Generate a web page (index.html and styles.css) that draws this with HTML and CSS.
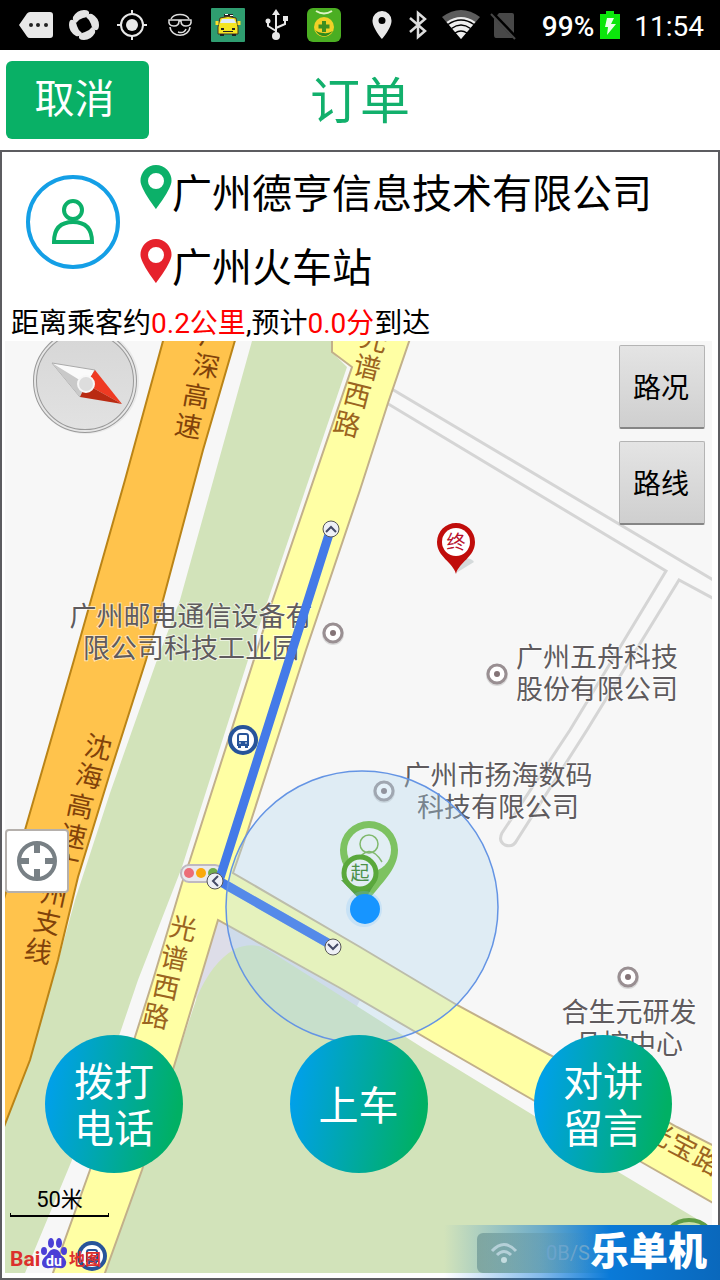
FILE: index.html
```html
<!DOCTYPE html>
<html lang="zh-CN">
<head>
    <meta charset="UTF-8">
    <meta name="viewport" content="width=device-width, initial-scale=1.0">
    <title>订单</title>
    <link rel="stylesheet" href="styles.css">
</head>
<body>
    <div class="status-bar">
        <div class="status-left">
            <svg viewBox="0 0 48 50"><path d="M7 25 15 13.500q1-1.500 3-1.500h20q3 0 3 3v20q0 3-3 3H18q-2 0-3-1.500z" fill="#e8e8e8"/><g fill="#222"><circle cx="19" cy="25" r="2"/><circle cx="26" cy="25" r="2"/><circle cx="34" cy="25" r="2"/></g></svg>
            <svg viewBox="0 0 48 50"><g fill="#e4e4e4"><path id="petal" d="M13 17Q17 10 24 10q6 0 5 4-1 3-6 4-4 1-7 5-4-2-3-6z"/><use href="#petal" transform="rotate(90 24 25)"/><use href="#petal" transform="rotate(180 24 25)"/><use href="#petal" transform="rotate(270 24 25)"/></g></svg>
            <svg viewBox="0 0 48 50"><g fill="none" stroke="#e8e8e8" stroke-width="2"><circle cx="24" cy="25" r="11"/><path d="M24 10v5M24 35v5M9 25h5M34 25h5"/></g><circle cx="24" cy="25" r="6" fill="#e8e8e8"/></svg>
            <svg viewBox="0 0 48 50"><g fill="none" stroke="#ddd" stroke-width="1.500"><path d="M15 19C18 13 30 13 33 19M14 27c1 11 19 11 20 0M22 32q6 2 8-3"/><path d="M13 20h22q1 6-5 6-5 0-5-5h-2q0 5-5 5-6 0-5-6z"/></g></svg>
            <svg viewBox="0 0 48 50"><rect x="7" y="8" width="34" height="34" rx="1" fill="#2f9d70"/><path d="M20 14h9v3h-9z" fill="#222"/><path d="M21 14h3v1h-3zM26 15h3v1h-3z" fill="#fff"/><path d="M16 18q8-3 16 0l2 9v7H14v-7z" fill="#f4e522" stroke="#432" stroke-width="1"/><path d="M18 19h12l2 4H16z" fill="#ddeafa"/><path d="M13 21v4M35 21v4" stroke="#ffe02b" stroke-width="3"/><path d="M17 28h3v2h-3zM28 28h3v2h-3zM19 31h10v1H19zM16 34h4v2h-4zM28 34h4v2h-4z" fill="#222"/></svg>
            <svg viewBox="0 0 48 50"><g fill="none" stroke="#e8e8e8" stroke-width="2"><path d="M24 14v21M24 31l-8-5v-4M24 28l9-4v-5"/></g><g fill="#e8e8e8"><path d="M24 9l4 6h-8zM31 16h5v5h-5z"/><circle cx="16" cy="21" r="2.500"/><circle cx="24" cy="36" r="4"/></g></svg>
            <svg viewBox="0 0 48 50"><rect x="7" y="8" width="34" height="34" rx="6" fill="#4bae22"/><path d="M16 11q8 5 16 0" fill="none" stroke="#dff5c5" stroke-width="2"/><circle cx="24" cy="27" r="10" fill="#f2d127"/><path d="M15 30q8 12 18 1-6 3-9 2-6 0-9-3z" fill="#2e8a1c"/><path d="M24 21v11M18.500 26.500h11" stroke="#3d8e20" stroke-width="4"/></svg>
        </div>
        <div class="status-right">
            <svg class="icon-pin" viewBox="0 0 20 30"><path d="M10 1a9.500 9.500 0 0 0-9.500 10C.5 18 10 29 10 29s9.500-11 9.500-18A9.500 9.500 0 0 0 10 1zm0 6a3.500 3.500 0 1 1 0 7 3.500 3.500 0 0 1 0-7z" fill="#e8e8e8" fill-rule="evenodd"/></svg>
            <svg class="icon-bt" viewBox="0 0 20 30"><path d="M2 8l15 13-7 6V3l7 6L2 22" fill="none" stroke="#ddd" stroke-width="2.500"/></svg>
            <svg class="icon-wifi" viewBox="0 0 38 30"><path d="M0 7q19-14 38 0L19 29z" fill="#5c5c5c"/><path d="M4.500 12q14.500-10 29 0L19 29z" fill="#eee"/><path d="M6 14.500q13-9 26 0M9.500 18.500q9.500-7 19 0M13 23q6-4 12 0" fill="none" stroke="#000" stroke-width="1.500"/></svg>
            <svg class="icon-sim" viewBox="0 0 28 30"><path d="M4 9l5-6h13q2 0 2 2v20q0 3-2 3H6q-2 0-2-3z" fill="#484848"/><path d="M2 3l24 25" stroke="#000" stroke-width="4"/><path d="M1 4l24 25" stroke="#484848" stroke-width="2"/></svg>
            <span class="percent">99%</span>
            <svg class="icon-battery" viewBox="0 0 20 30"><path d="M6 1h8v3h6v25H0V4h6z" fill="#0be60b"/><path d="M7 8h7l-3 6h5L7 25l1-8H5z" fill="#eaffea"/></svg>
            <span class="clock">11:54</span>
        </div>
    </div>

    <header class="title-bar">
        <button type="button" class="cancel">取消</button>
        <h1>订单</h1>
    </header>

    <main class="order">
        <section class="passenger">
            <svg class="avatar" viewBox="0 0 94 94"><circle cx="47" cy="47" r="45" fill="none" stroke="#149fe6" stroke-width="4"/><g fill="none" stroke="#0cb069" stroke-width="4"><circle cx="47" cy="35" r="9"/><path d="M28 67q0-20 19-20t19 20z"/></g></svg>
            <div class="places">
                <div class="place">
                    <svg class="place-pin" viewBox="0 0 32 44"><path class="start" d="M16 0A15.500 15.500 0 0 0 .5 16C.5 24 16 44 16 44s15.500-20 15.500-28A15.500 15.500 0 0 0 16 0zm0 8a8 8 0 1 1 0 16 8 8 0 0 1 0-16z" fill-rule="evenodd"/></svg>
                    <span>广州德亨信息技术有限公司</span>
                </div>
                <div class="place">
                    <svg class="place-pin" viewBox="0 0 32 44"><path class="end" d="M16 0A15.500 15.500 0 0 0 .5 16C.5 24 16 44 16 44s15.500-20 15.500-28A15.500 15.500 0 0 0 16 0zm0 8a8 8 0 1 1 0 16 8 8 0 0 1 0-16z" fill-rule="evenodd"/></svg>
                    <span>广州火车站</span>
                </div>
            </div>
        </section>
        <p class="eta">距离乘客约<em>0.2公里</em>,预计<em>0.0分</em>到达</p>

        <section class="map">
            <svg class="map-canvas" viewBox="5 341 707 932" preserveAspectRatio="xMidYMid slice">
                <defs>
                    <g id="poi"><circle r="11" cy="1" fill="#bbb" opacity=".5"/><circle r="9" fill="#fff" stroke="#998f92" stroke-width="3"/><circle r="3" fill="#847477"/></g>
                    <g id="bus"><circle r="15" fill="#27549a"/><circle r="11" fill="#fff"/><path d="M-5-4q0-2 2-2h6q2 0 2 2v9H-5z" fill="none" stroke="#27549a" stroke-width="2"/><path d="M-5 1H5v4H-5zM-5 5h3v3h-3zM2 5h3v3H2z" fill="#27549a"/><path d="M-4 3h2M2 3h2" stroke="#fff"/></g>
                    <g id="node"><circle r="8" fill="#eef0f6" stroke="#555" stroke-width="1"/><path d="M-5 3l5-5 5 5" fill="none" stroke="#444a66" stroke-width="2"/></g>
                    <linearGradient id="dial" x2="0" y2="1"><stop offset="0" stop-color="#d6d6d6"/><stop offset="1" stop-color="#e2e2e2"/></linearGradient>
                </defs>

                <!-- parks -->
                <path class="park" d="M252 341H332V352L347 367 267 603 248 660 182 867 138 980 120 1033 72 1160 25 1273H5V1123L53 980 75 900 110 793 157 660 180 600z"/>
                <path fill="#dddde8" d="M218 920L360 1000 352 1016 200 1026 196 996z"/>
                <path class="park" d="M105 1273L142 1170 175 1063 197 997Q212 962 235 949 250 942 265 948L352 1003 423 1048 533 1115 620 1173 712 1228V1273z"/>

                <!-- roads -->
                <path class="lane" d="M380 382L720 584V602L679 580 587 730 517 840Q513 848 505 845 498 841 502 833L570 730 666 571 380 399z"/>
                <path class="highway" d="M166 330L125 480 74 660 25 830 0 912V1137L30 1060 58 960 78 877 110 773 146 660 163 600 203 450 238 330z"/>
                <path class="road" d="M332 330V352L352 367 272 602 257 650 190 860 182 883 153 980 135 1037 90 1170 49 1284H101L142 1170 175 1063 200 980 218 920 340 988 443 1048 533 1100 643 1163 720 1207V1149L677 1127 550 1055 457 1005 360 947 233 873 248 830 306 650 360 490 388 403 413 330z"/>

                <!-- road names -->
                <g class="road-name highway-name">
                    <text transform="translate(213 337) rotate(10)" y="9">广</text>
                    <text transform="translate(206 367) rotate(10)" y="9">深</text>
                    <text transform="translate(196 397) rotate(10)" y="9">高</text>
                    <text transform="translate(188 427) rotate(10)" y="9">速</text>
                    <text transform="translate(98 748) rotate(12)" y="9">沈</text>
                    <text transform="translate(89 777) rotate(12)" y="9">海</text>
                    <text transform="translate(80 807) rotate(12)" y="9">高</text>
                    <text transform="translate(73 837) rotate(12)" y="9">速</text>
                    <text transform="translate(65 867) rotate(12)" y="9">广</text>
                    <text transform="translate(54 895) rotate(12)" y="9">州</text>
                    <text transform="translate(47 923) rotate(12)" y="9">支</text>
                    <text transform="translate(38 952) rotate(12)" y="9">线</text>
                </g>
                <g class="road-name">
                    <text transform="translate(374 340) rotate(14)" y="9">光</text>
                    <text transform="translate(367 368) rotate(14)" y="9">谱</text>
                    <text transform="translate(357 396) rotate(14)" y="9">西</text>
                    <text transform="translate(347 425) rotate(14)" y="9">路</text>
                    <text transform="translate(183 929) rotate(12)" y="9">光</text>
                    <text transform="translate(174 959) rotate(12)" y="9">谱</text>
                    <text transform="translate(166 988) rotate(12)" y="9">西</text>
                    <text transform="translate(156 1017) rotate(12)" y="9">路</text>
                    <text transform="translate(659 1134) rotate(28)" y="9">光</text>
                    <text transform="translate(683 1148) rotate(28)" y="9">宝</text>
                    <text transform="translate(707 1162) rotate(28)" y="9">路</text>
                </g>

                <!-- places -->
                <g class="poi-name">
                    <text x="191" y="626">广州邮电通信设备有</text>
                    <text x="191" y="658">限公司科技工业园</text>
                    <text x="597" y="667">广州五舟科技</text>
                    <text x="597" y="699">股份有限公司</text>
                    <text x="498" y="785">广州市扬海数码</text>
                    <text x="498" y="817">科技有限公司</text>
                    <text x="629" y="1022">合生元研发</text>
                    <text x="629" y="1054">品控中心</text>
                </g>
                <use href="#poi" x="333" y="633"/>
                <use href="#poi" x="497" y="674"/>
                <use href="#poi" x="384" y="791"/>
                <use href="#poi" x="628" y="977"/>
                <use href="#bus" x="243" y="740"/>
                <use href="#bus" x="92" y="1256"/>
                <circle cx="689" cy="1247" r="27" fill="#c9dfa8" stroke="#5f9d46" stroke-width="4"/>
                <rect x="181" y="865" width="42" height="17" rx="8" fill="#e9e9ee" stroke="#bfb9c0" stroke-width="2"/>
                <circle cx="189" cy="873" r="5" fill="#ec6d78"/><circle cx="201" cy="873" r="5" fill="#fba90b"/><circle cx="213" cy="873" r="5" fill="#73ae4c"/>

                <!-- route -->
                <path d="M331 528L219 881l114 65" fill="none" stroke="#447ae8" stroke-width="9"/>
                <circle cx="362" cy="907" r="136" fill="#b0d8f0" fill-opacity=".33"/>
                <path d="M226 885l107 61" fill="none" stroke="#4a80e8" stroke-opacity=".6" stroke-width="9"/>
                <circle cx="362" cy="907" r="136" fill="none" stroke="#6494e4" stroke-width="1.500"/>
                <use href="#node" x="331" y="529"/>
                <use href="#node" transform="translate(215 881) rotate(-90)"/>
                <use href="#node" transform="translate(333 947) rotate(180)"/>

                <!-- start, end and current position -->
                <path d="M369 900c-8-16-29-28-29-50a29 29 0 0 1 58 0c0 20-18 34-29 50z" fill="#7dc261"/>
                <circle cx="369" cy="850" r="22" fill="#e2eef4"/>
                <g fill="none" stroke="#80b96d" stroke-width="1.500"><circle cx="369" cy="844" r="9"/><path d="M355 864q14-24 27-2"/></g>
                <path d="M341 880l22 23 12-20z" fill="#55a045"/>
                <circle cx="360" cy="873" r="16" fill="#e2eef4" stroke="#5aa83c" stroke-width="5"/>
                <text class="pin-text start" x="360" y="880">起</text>
                <circle cx="364" cy="909" r="18" fill="#7fc4fb" opacity=".25"/>
                <circle cx="365" cy="909" r="15" fill="#1795ff"/>
                <path d="M456 573l18-11q-3-5-10-3z" fill="#d5dadb"/>
                <path d="M456 574c-3-12-19-17-19-32a19 19 0 0 1 38 0c0 15-16 20-19 32z" fill="#c00d0b"/>
                <circle cx="456" cy="542" r="14" fill="#fff"/>
                <text class="pin-text end" x="456" y="549">终</text>

                <!-- compass -->
                <circle cx="86" cy="381" r="53" fill="#ddd" opacity=".5"/>
                <circle cx="85" cy="381" r="50" fill="url(#dial)" stroke="#999" stroke-width="4"/>
                <circle cx="85" cy="381" r="50" fill="none" stroke="#e6e6e6" stroke-width="2"/>
                <path d="M52 363l43 7-15 27z" fill="#fafafa" stroke="#aaa"/>
                <path d="M52 363l34 21-6 13z" fill="#c9c9c9"/>
                <path d="M95 370l27 34-36-20z" fill="#ef3a22"/>
                <path d="M122 404l-42-7 6-13z" fill="#b92a12"/>
                <circle cx="86" cy="384" r="8" fill="#ddd" stroke="#f7f7f7" stroke-width="2"/>
            </svg>

            <div class="layer-buttons">
                <button type="button">路况</button>
                <button type="button">路线</button>
            </div>

            <button type="button" class="locate" aria-label="定位">
                <svg viewBox="0 0 42 42"><circle cx="21" cy="21" r="18" fill="none" stroke="#788085" stroke-width="4"/><path d="M21 3v10M21 29v10M3 21h10M29 21h10" stroke="#788085" stroke-width="6"/></svg>
            </button>

            <div class="actions">
                <button type="button">拨打<br>电话</button>
                <button type="button">上车</button>
                <button type="button">对讲<br>留言</button>
            </div>

            <div class="map-legend">
                <div class="scale">50米</div>
                <svg class="baidu" viewBox="0 0 94 34">
                    <text x="0" y="29" class="bai">Bai</text>
                    <g fill="#4a3fd6"><ellipse cx="34" cy="14" rx="3" ry="4"/><ellipse cx="41" cy="6" rx="3" ry="5"/><ellipse cx="49" cy="6" rx="3" ry="5"/><ellipse cx="54" cy="14" rx="3" ry="4"/><path d="M44 12q5 0 7 6 6 4 5 9-1 5-7 4-5-1-9 0-8 1-8-5 0-4 5-8 3-6 7-6z"/></g>
                    <text x="36" y="29" class="du">du</text>
                    <text x="59" y="28" class="ditu">地图</text>
                </svg>
            </div>
        </section>
    </main>

    <div class="watermark">
        <div class="speed">
            <svg viewBox="0 0 28 22"><g fill="none" stroke="#b5d0d8" stroke-width="3"><path d="M2 9q12-13 24 0M7 13q7-7 14 0"/></g><circle cx="14" cy="18" r="3" fill="#c4dce0"/></svg>
            <span>0B/S</span>
        </div>
        <strong>乐单机</strong>
    </div>
</body>
</html>
```
FILE: styles.css
```css
* {
    box-sizing: border-box;
}
body {
    position: relative;
    display: flex;
    flex-direction: column;
    min-height: 100vh;
    margin: 0;
    background-color: #fff;
    color: #000;
    font-family: Roboto, "Noto Sans CJK SC", sans-serif;
}
button {
    padding: 0;
    border: none;
    font-family: inherit;
    cursor: pointer;
}

/* status bar */
.status-bar {
    display: flex;
    justify-content: space-between;
    height: 50px;
    padding: 0 16px 0 12px;
    background-color: #000;
    color: #fff;
    font-size: 28px;
    line-height: 54px;
}
.status-left {
    display: flex;
}
.status-left svg {
    width: 48px;
    height: 50px;
}
.status-right {
    display: flex;
    align-items: center;
    height: 50px;
}
.status-right svg {
    height: 30px;
}
.status-right span {
    padding-top: 4px;
}
.icon-pin {
    width: 20px;
    margin-right: 16px;
}
.icon-bt {
    width: 20px;
    margin-right: 14px;
}
.icon-wifi {
    width: 38px;
    margin-right: 10px;
}
.icon-sim {
    width: 28px;
    margin-right: 24px;
}
.icon-battery {
    width: 20px;
    margin: 0 14px 0 6px;
}
.percent {
    font-weight: 500;
}

/* title */
.title-bar {
    display: grid;
    grid-template-columns: 1fr auto 1fr;
    align-items: center;
    height: 100px;
    padding: 0 6px;
}
.cancel {
    width: 143px;
    height: 78px;
    padding-right: 6px;
    border-radius: 6px;
    background-color: #09b066;
    color: #fff;
    font-size: 40px;
    line-height: 76px;
}
h1 {
    margin: 0;
    padding-top: 4px;
    color: #12b06c;
    font-size: 50px;
    font-weight: 400;
    line-height: 60px;
}

/* order */
.order {
    display: flex;
    flex: 1;
    flex-direction: column;
    padding: 4px 6px 5px 3px;
    border: 2px solid #5c5c60;
}
.passenger {
    display: flex;
    gap: 20px;
    padding-left: 21px;
}
.avatar {
    flex: none;
    width: 94px;
    height: 94px;
    margin-top: 19px;
}
.place {
    display: flex;
    height: 74px;
    font-size: 40px;
    line-height: 78px;
}
.place-pin {
    flex: none;
    width: 32px;
    height: 44px;
    margin-top: 9px;
}
.start {
    fill: #0cb069;
}
.end {
    fill: #e6222c;
}
.eta {
    height: 37px;
    margin: 0;
    padding-left: 6px;
    font-size: 28px;
    line-height: 39px;
}
.eta em {
    color: #f00;
    font-style: normal;
}

/* map */
.map {
    position: relative;
    flex: 1;
    min-height: 700px;
    overflow: hidden;
    background-color: #f7f7f7;
}
.map-canvas {
    position: absolute;
    width: 100%;
    height: 100%;
}
.park {
    fill: #d2e3ba;
}
.lane {
    fill: #f8f8f8;
    stroke: #d5d5d5;
    stroke-width: 3;
}
.highway {
    fill: #ffc34c;
    stroke: #ba8417;
    stroke-width: 2;
}
.road {
    fill: #ffffa4;
    stroke: #c2b08a;
    stroke-width: 2;
}
.road-name {
    fill: #9b6420;
    font-size: 27px;
    text-anchor: middle;
}
.highway-name {
    fill: #81420a;
}
.poi-name {
    fill: #5f5b5e;
    stroke: rgba(255, 255, 255, 0.6);
    stroke-width: 2;
    paint-order: stroke;
    font-size: 27px;
    text-anchor: middle;
}
.pin-text {
    font-size: 19px;
    text-anchor: middle;
}
.pin-text.start {
    fill: #4c9148;
}
.pin-text.end {
    fill: #b8102c;
}
.layer-buttons {
    position: absolute;
    top: 4px;
    right: 7px;
    display: grid;
    gap: 12px;
}
.layer-buttons button {
    width: 86px;
    height: 84px;
    padding: 0 2px 2px 0;
    border: 1px solid #b4b4b4;
    border-bottom: 2px solid #858585;
    border-radius: 2px;
    background: linear-gradient(#e4e4e4, #cfcfcf);
    font-size: 28px;
}
.locate {
    position: absolute;
    bottom: 380px;
    left: 0;
    width: 64px;
    height: 64px;
    border: 2px solid #b5b0ac;
    border-radius: 4px;
    background-color: #fff;
}
.locate svg {
    display: block;
    width: 42px;
    margin: 0 auto;
}
.actions {
    position: absolute;
    right: 40px;
    bottom: 100px;
    left: 40px;
    display: flex;
    justify-content: space-between;
}
.actions button {
    width: 138px;
    height: 138px;
    padding-top: 4px;
    border-radius: 50%;
    background: linear-gradient(100deg, #00a0e9 8%, #00b064 90%);
    color: #fff;
    font-size: 40px;
    line-height: 47px;
}
.map-legend {
    position: absolute;
    bottom: 2px;
    left: 5px;
}
.scale {
    position: relative;
    width: 99px;
    height: 32px;
    margin-bottom: 20px;
    border-bottom: 2px solid #000;
    font-size: 22px;
    line-height: 30px;
    text-align: center;
}
.scale::after {
    content: "";
    position: absolute;
    right: 0;
    bottom: 0;
    left: 0;
    height: 2px;
    border: solid #000;
    border-width: 0 1px;
}
.baidu {
    display: block;
    width: 94px;
    height: 34px;
}
.bai {
    fill: #dc2f2c;
    font-size: 21px;
    font-weight: 700;
}
.du {
    fill: #fff;
    font-size: 14px;
    font-weight: 700;
}
.ditu {
    fill: #dc2f2c;
    font-size: 16px;
    font-weight: 700;
}

/* watermark */
.watermark {
    position: absolute;
    right: 0;
    bottom: 0;
    display: flex;
    align-items: center;
    justify-content: space-between;
    width: 276px;
    height: 55px;
    padding: 0 13px 0 33px;
    background: linear-gradient(to right, rgba(10, 118, 215, 0), rgba(10, 118, 215, 0.5) 35%, #0a7ad8 60%, #0a68bc);
    pointer-events: none;
}
.speed {
    display: flex;
    align-items: center;
    gap: 28px;
    width: 113px;
    height: 40px;
    padding-left: 13px;
    border-radius: 6px 0 0 6px;
    background: linear-gradient(to right, rgba(80, 125, 130, 0.5), rgba(40, 120, 190, 0));
    color: #6ba4cb;
    font-size: 20px;
    white-space: nowrap;
}
.speed svg {
    flex: none;
    width: 28px;
}
.watermark strong {
    color: #fff;
    font-size: 39px;
    font-weight: 900;
    line-height: 59px;
}
```
